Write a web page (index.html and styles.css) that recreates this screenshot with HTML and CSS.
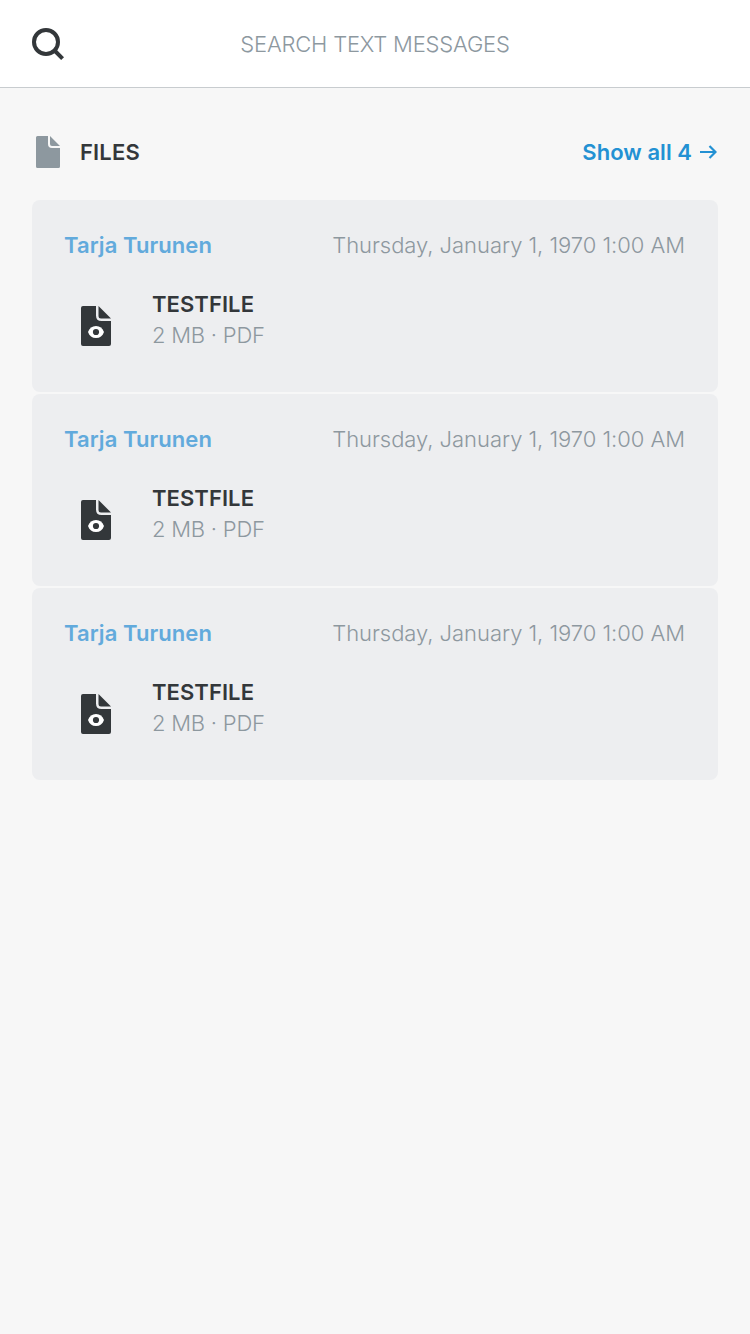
FILE: index.html
```html
<!DOCTYPE html>
<html lang="en">
<head>
<meta charset="utf-8">
<title>Search</title>
<link rel="stylesheet" href="styles.css">
</head>
<body>
<svg class="defs" aria-hidden="true">
  <symbol id="file-eye" viewBox="0 0 30 40">
    <path d="M2 0H15V9.500Q15 15 20.500 15H30V38Q30 40 28 40H2Q0 40 0 38V2Q0 0 2 0Z"/>
    <path d="M17.500 0L30 12.500H20Q17.500 12.500 17.500 10Z"/>
    <path fill="#fff" d="M7 26C8.500 22 11 20 15 20S21.500 22 23 26C21.500 30 19 32 15 32S8.500 30 7 26Z"/>
    <circle cx="15" cy="26" r="3.100"/>
  </symbol>
</svg>
<header class="search">
  <svg class="search-icon" viewBox="0 0 32 32"><circle cx="14" cy="14" r="12"/><path d="M22.500 22.500L30.600 30.600"/></svg>
  <span class="search-hint">SEARCH TEXT MESSAGES</span>
</header>
<main class="results">
  <div class="section-head">
    <svg class="file-icon" viewBox="0 0 24 32"><path d="M1.500 0H12V8Q12 12 16 12H24V30.500Q24 32 22.500 32H1.500Q0 32 0 30.500V1.500Q0 0 1.500 0ZM14 0L24 10H16Q14 10 14 8Z"/></svg>
    <h2 class="section-title">FILES</h2>
    <a class="show-all"><span class="show-all-label">Show all 4</span><svg class="arrow" viewBox="0 0 17 14"><path d="M0 7H15.500M9.500 1L15.500 7L9.500 13"/></svg></a>
  </div>
  <article class="card">
    <div class="card-head"><span class="sender">Tarja Turunen</span><time class="date">Thursday, January 1, 1970 1:00 AM</time></div>
    <div class="file"><svg class="file-eye"><use href="#file-eye"/></svg><div class="file-text"><div class="file-name">TESTFILE</div><div class="file-meta">2 MB · PDF</div></div></div>
  </article>
  <article class="card">
    <div class="card-head"><span class="sender">Tarja Turunen</span><time class="date">Thursday, January 1, 1970 1:00 AM</time></div>
    <div class="file"><svg class="file-eye"><use href="#file-eye"/></svg><div class="file-text"><div class="file-name">TESTFILE</div><div class="file-meta">2 MB · PDF</div></div></div>
  </article>
  <article class="card">
    <div class="card-head"><span class="sender">Tarja Turunen</span><time class="date">Thursday, January 1, 1970 1:00 AM</time></div>
    <div class="file"><svg class="file-eye"><use href="#file-eye"/></svg><div class="file-text"><div class="file-name">TESTFILE</div><div class="file-meta">2 MB · PDF</div></div></div>
  </article>
</main>
</body>
</html>
```
FILE: styles.css
```css
* { box-sizing: border-box; }
body {
  margin: 0;
  min-height: 1334px;
  background: #f7f7f7;
  color: #33373a;
  font: 300 22px/32px Inter, sans-serif;
  white-space: nowrap;
}
.defs { display: block; width: 0; height: 0; }
.search {
  display: grid;
  grid-template-columns: 32px 1fr 32px;
  align-items: center;
  height: 88px;
  padding: 0 32px;
  background: #fff;
  border-bottom: 1px solid #c8cccf;
}
.search-icon { width: 32px; height: 32px; fill: none; stroke: #33373a; stroke-width: 4; }
.search-hint { text-align: center; color: #8d989f; letter-spacing: -0.2px; }
.results { padding: 0 32px; }
.section-head { display: flex; align-items: center; height: 112px; padding: 16px 0 0 4px; }
.file-icon { width: 24px; height: 32px; fill: #8d989f; }
.section-title { margin: 0 0 0 20px; font-size: 22px; font-weight: 560; letter-spacing: 0.15px; }
.show-all {
  display: flex;
  align-items: center;
  gap: 8px;
  margin-left: auto;
  padding-right: 1px;
  color: #2391d3;
  font-weight: 560;
  letter-spacing: 0.05px;
}
.arrow { width: 17px; height: 14px; fill: none; stroke: #2391d3; stroke-width: 2.2; }
.card { height: 192px; margin-bottom: 2px; padding: 29px 33px 0 32px; background: #edeef0; border-radius: 8px; }
.card-head { display: flex; justify-content: space-between; }
.sender { color: #62aadc; font-weight: 560; letter-spacing: 0.07px; }
.date, .file-meta { color: #8d989f; }
.date { letter-spacing: -0.04px; }
.file-meta { letter-spacing: -0.22px; }
.file { display: flex; padding: 27px 0 0 17px; }
.file-eye { width: 30px; height: 40px; margin-top: 18px; fill: #33373a; }
.file-text { margin-left: 41px; }
.file-name { height: 31px; font-weight: 560; letter-spacing: 0.07px; }
```
